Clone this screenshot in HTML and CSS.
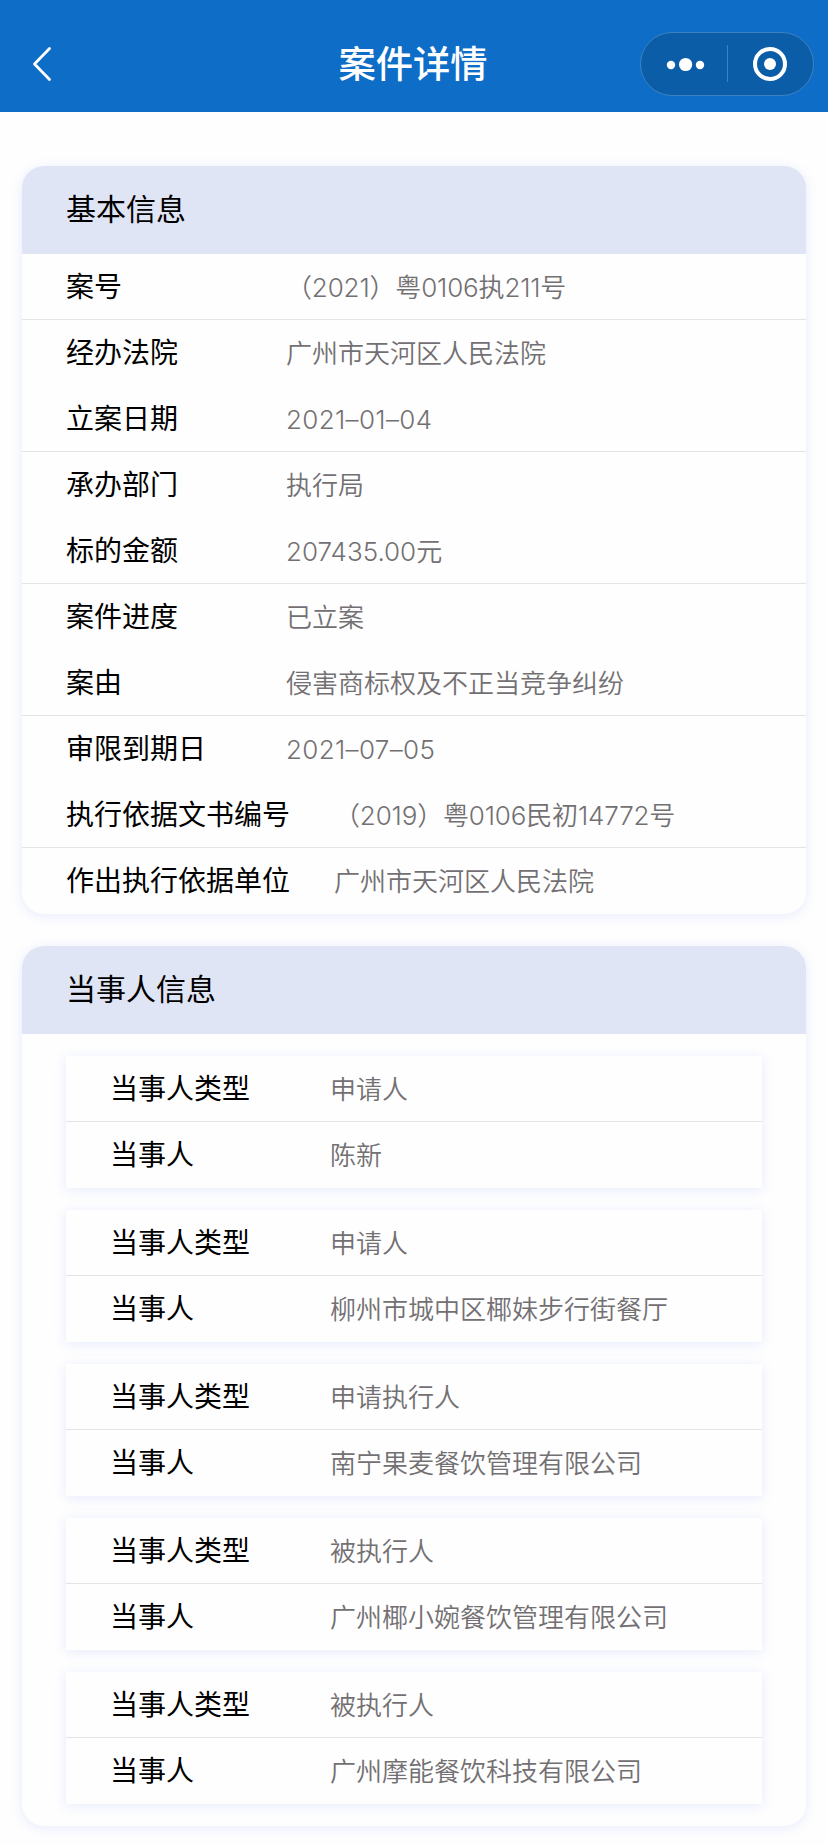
FILE: index.html
```html
<!DOCTYPE html>
<html lang="zh-CN">
<head>
	<meta charset="UTF-8" />
	<title>案件详情</title>
	<link rel="stylesheet" href="styles.css">
</head>
<body>
	<!-- 顶部导航 开始-->
	<div class="nav">
		<svg class="back" width="20" height="36" viewBox="0 0 20 36">
			<path d="M17.5 2.5L2.5 18L17.5 33.5" fill="none" stroke="#fff" stroke-width="2.8" stroke-linecap="round" stroke-linejoin="round"/>
		</svg>
		<h1>案件详情</h1>
		<div class="capsule">
			<svg width="174" height="64" viewBox="0 0 174 64">
				<rect x="0.5" y="0.5" width="173" height="63" rx="31.5" fill="#0c5da8" stroke="#3d82c3"/>
				<g fill="#fff">
					<circle cx="31" cy="33" r="4.2"/>
					<circle cx="45.6" cy="32.5" r="6.6"/>
					<circle cx="60" cy="33" r="4.2"/>
					<circle cx="130" cy="32" r="6"/>
				</g>
				<path d="M87.5 13V50" stroke="#3d82c3"/>
				<circle cx="130" cy="32" r="15" fill="none" stroke="#fff" stroke-width="4"/>
			</svg>
		</div>
	</div>
	<!-- 顶部导航 结束-->
	<!-- 基本信息 开始-->
	<div class="card">
		<h2>基本信息</h2>
		<ul class="basic">
			<li><span class="name">案号</span><span class="val no">（2021）粤0106执211号</span></li>
			<li><span class="name">经办法院</span><span class="val">广州市天河区人民法院</span></li>
			<li><span class="name">立案日期</span><span class="val date">2021–01–04</span></li>
			<li><span class="name">承办部门</span><span class="val">执行局</span></li>
			<li><span class="name">标的金额</span><span class="val">207435.00元</span></li>
			<li><span class="name">案件进度</span><span class="val">已立案</span></li>
			<li><span class="name">案由</span><span class="val">侵害商标权及不正当竞争纠纷</span></li>
			<li><span class="name">审限到期日</span><span class="val date">2021–07–05</span></li>
			<li><span class="name">执行依据文书编号</span><span class="val no">（2019）粤0106民初14772号</span></li>
			<li><span class="name">作出执行依据单位</span><span class="val">广州市天河区人民法院</span></li>
		</ul>
	</div>
	<!-- 基本信息 结束-->
	<!-- 当事人信息 开始-->
	<div class="card">
		<h2>当事人信息</h2>
		<div class="party">
			<ul>
				<li><span class="name">当事人类型</span><span class="val">申请人</span></li>
				<li><span class="name">当事人</span><span class="val">陈新</span></li>
			</ul>
			<ul>
				<li><span class="name">当事人类型</span><span class="val">申请人</span></li>
				<li><span class="name">当事人</span><span class="val">柳州市城中区椰妹步行街餐厅</span></li>
			</ul>
			<ul>
				<li><span class="name">当事人类型</span><span class="val">申请执行人</span></li>
				<li><span class="name">当事人</span><span class="val">南宁果麦餐饮管理有限公司</span></li>
			</ul>
			<ul>
				<li><span class="name">当事人类型</span><span class="val">被执行人</span></li>
				<li><span class="name">当事人</span><span class="val">广州椰小婉餐饮管理有限公司</span></li>
			</ul>
			<ul>
				<li><span class="name">当事人类型</span><span class="val">被执行人</span></li>
				<li><span class="name">当事人</span><span class="val">广州摩能餐饮科技有限公司</span></li>
			</ul>
		</div>
	</div>
	<!-- 当事人信息 结束-->
</body>
</html>
```
FILE: styles.css
```css
*{
	margin:0;
	padding:0;
	box-sizing:border-box;
}
li{
	list-style:none;
}
body{
	height:1845px;
	background:#fefefe;
	font-family:Inter,"Noto Sans CJK SC",sans-serif;
	color:#000;
	overflow:hidden;
}
.nav{
	display:grid;
	grid-template-columns:1fr auto 1fr;
	align-items:center;
	height:112px;
	padding:16px 14px 0 32px;
	margin-bottom:54px;
	background:#0e6dc6;
}
.nav h1{
	padding-top:2px;
	font-size:37.3px;
	line-height:62px;
	font-weight:500;
	color:#fff;
	margin-right:20px;
}
.capsule{
	justify-self:end;
	height:64px;
}
.capsule svg{
	display:block;
}
.card{
	margin:0 22px 32px;
	border-radius:22px;
	background:#fefefe;
	box-shadow:0 2px 12px rgba(80,110,240,0.13);
	overflow:hidden;
}
.card h2{
	height:88px;
	padding-left:44px;
	line-height:86px;
	font-size:30px;
	font-weight:400;
	background:#e0e5f5;
}
.card li{
	display:flex;
	height:66px;
	padding-left:44px;
	line-height:67px;
	border-bottom:1px solid transparent;
	white-space:nowrap;
}
.basic li:nth-child(odd),
.party li:first-child{
	border-bottom-color:#e4e4e6;
}
.card li:last-child{
	border-bottom-color:transparent;
}
.name{
	min-width:176px;
	margin-right:44px;
	font-size:28px;
}
.val{
	font-size:26px;
	font-weight:350;
	color:#737073;
}
.val.no{
	letter-spacing:-0.15px;
}
.val.date{
	letter-spacing:0.35px;
}
.party{
	display:flex;
	flex-direction:column;
	gap:22px;
	padding:22px 44px;
}
.party ul{
	background:#fefefe;
	box-shadow:0 2px 12px rgba(80,110,240,0.13);
}
```
